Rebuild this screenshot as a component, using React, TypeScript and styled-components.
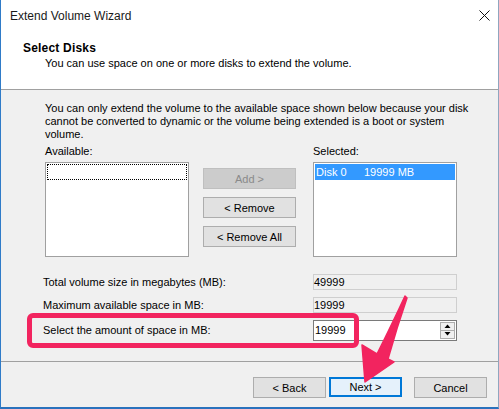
import React from "react";
import styled, { createGlobalStyle } from "styled-components";

const Global = createGlobalStyle`
  html, body { margin: 0; padding: 0; background: #ffffff; }
  body { font-family: "Liberation Sans", Arial, sans-serif; font-size: 11px; color: #000; }
  * { box-sizing: border-box; }
`;

const Window = styled.div`
  position: relative;
  width: 499px;
  height: 409px;
  background: #f0f0f0;
  border-left: 1px solid #2f7bc8;
  border-right: 1px solid #8fa6bf;
  border-bottom: 2px solid #2a72bd;
  display: flex;
  flex-direction: column;
  overflow: hidden;
`;

const TitleBar = styled.div`
  height: 31px;
  flex: none;
  background: #fff;
  display: flex;
  align-items: center;
  justify-content: space-between;
  padding: 0 8px 0 9px;
`;

const Title = styled.span`
  font-size: 12px;
  color: #1a1a1a;
  margin-top: 1px;
`;

const Header = styled.div`
  height: 59px;
  flex: none;
  background: #fff;
  border-bottom: 1px solid #a0a0a0;
  padding: 10px 0 0 22px;
`;

const HeaderTitle = styled.div`
  font-size: 12px;
  font-weight: bold;
  line-height: 14px;
  letter-spacing: 0.2px;
`;

const HeaderSub = styled.div`
  font-size: 11px;
  line-height: 14px;
  margin: 1px 0 0 22px;
`;

const Body = styled.div`
  position: relative;
  height: 272px;
  flex: none;
  border-bottom: 1px solid #a0a0a0;
  padding: 12px 0 0 42px;
`;

const Intro = styled.p`
  margin: 0 0 0 2px;
  line-height: 13px;
  font-size: 11px;
`;

const DiskGrid = styled.div`
  display: grid;
  grid-template-columns: 144px 96px 144px;
  grid-template-rows: 13px 95px;
  column-gap: 14px;
  row-gap: 4px;
  margin: 4px 0 0 2px;
`;

const Label = styled.span`
  line-height: 13px;
  font-size: 11px;
  white-space: nowrap;
`;

const ListBox = styled.div`
  background: #fff;
  border: 1px solid #a0a0a0;
  padding: 1px;
`;

const FocusRow = styled.div`
  height: 16px;
  border: 1px dotted #000;
`;

const SelectedItem = styled.div`
  height: 16px;
  background: #3399ff;
  color: #fff;
  display: flex;
  align-items: center;
  padding-left: 1px;
  font-size: 11px;
`;

const ItemCell = styled.span<{ $w?: number }>`
  width: ${(p) => (p.$w ? `${p.$w}px` : "auto")};
`;

const ButtonColumn = styled.div`
  display: flex;
  flex-direction: column;
  gap: 8px;
  padding: 6px 3px 0 0;
`;

const Button = styled.button<{ $disabled?: boolean; $default?: boolean }>`
  font-family: "Liberation Sans", Arial, sans-serif;
  font-size: 11px;
  height: ${(p) => (p.$default ? 20 : 21)}px;
  padding: 0;
  color: ${(p) => (p.$disabled ? "#8a8a8a" : "#000")};
  background: ${(p) => (p.$disabled ? "#cccccc" : p.$default ? "#e5f1fb" : "#e1e1e1")};
  border: ${(p) =>
    p.$default ? "2px solid #0078d7" : p.$disabled ? "1px solid #bfbfbf" : "1px solid #adadad"};
  cursor: default;
`;

const SizeGrid = styled.div`
  display: grid;
  grid-template-columns: 270px 144px;
  grid-template-rows: 16px 16px 21px;
  row-gap: 7px;
  align-items: center;
  margin-top: 17px;
`;

const ReadOnlyField = styled.div`
  height: 16px;
  background: #f0f0f0;
  border: 1px solid #cfcfcf;
  display: flex;
  align-items: center;
  font-size: 11px;
`;

const SpinField = styled.div`
  height: 21px;
  background: #fff;
  border: 1px solid #7a7a7a;
  display: flex;
  align-items: center;
  justify-content: space-between;
  padding: 0 1px;
  font-size: 11px;
  margin-top: -1px;
`;

const Spinner = styled.div`
  display: flex;
  flex-direction: column;
  width: 15px;
  height: 17px;
`;

const SpinBtn = styled.div`
  flex: 1;
  background: #f0f0f0;
  border: 1px solid #adadad;
  display: flex;
  align-items: center;
  justify-content: center;
  & + & { border-top: none; }
`;

const Highlight = styled.div`
  position: absolute;
  left: 26px;
  top: 223px;
  width: 332px;
  height: 35px;
  border: 5px solid #f2245f;
  border-radius: 6px;
  pointer-events: none;
`;

const Footer = styled.div`
  flex: 1;
  display: flex;
  justify-content: flex-end;
  align-items: flex-start;
  padding: 15px 11px 0 0;
`;

const NavPair = styled.div`
  display: flex;
  gap: 3px;
  margin-right: 12px;
`;

const FooterButton = styled(Button)`
  width: 73px;
`;

const Overlay = styled.svg`
  position: absolute;
  left: -1px;
  top: 0;
  width: 499px;
  height: 409px;
  pointer-events: none;
`;

const Tri = ({ up }: { up?: boolean }) => (
  <svg width="7" height="4" viewBox="0 0 7 4">
    <path d={up ? "M0.5 4 L3.5 0.5 L6.5 4 Z" : "M0.5 0 L3.5 3.5 L6.5 0 Z"} fill="#000" />
  </svg>
);

export default function App() {
  return (
    <>
      <Global />
      <Window>
        <TitleBar>
          <Title>Extend Volume Wizard</Title>
          <svg width="11" height="11" viewBox="0 0 11 11">
            <path d="M0.5 0.5 L10.5 10.5 M10.5 0.5 L0.5 10.5" stroke="#111" strokeWidth="1" />
          </svg>
        </TitleBar>
        <Header>
          <HeaderTitle>Select Disks</HeaderTitle>
          <HeaderSub>You can use space on one or more disks to extend the volume.</HeaderSub>
        </Header>
        <Body>
          <Intro>
            You can only extend the volume to the available space shown below because your disk
            <br />
            cannot be converted to dynamic or the volume being extended is a boot or system
            <br />
            volume.
          </Intro>
          <DiskGrid>
            <Label>Available:</Label>
            <span />
            <Label>Selected:</Label>
            <ListBox>
              <FocusRow />
            </ListBox>
            <ButtonColumn>
              <Button $disabled>Add &gt;</Button>
              <Button>&lt; Remove</Button>
              <Button>&lt; Remove All</Button>
            </ButtonColumn>
            <ListBox>
              <SelectedItem>
                <ItemCell $w={48}>Disk 0</ItemCell>
                <ItemCell>19999 MB</ItemCell>
              </SelectedItem>
            </ListBox>
          </DiskGrid>
          <SizeGrid>
            <Label>Total volume size in megabytes (MB):</Label>
            <ReadOnlyField>49999</ReadOnlyField>
            <Label>Maximum available space in MB:</Label>
            <ReadOnlyField>19999</ReadOnlyField>
            <Label>Select the amount of space in MB:</Label>
            <SpinField>
              <span>19999</span>
              <Spinner>
                <SpinBtn>
                  <Tri up />
                </SpinBtn>
                <SpinBtn>
                  <Tri />
                </SpinBtn>
              </Spinner>
            </SpinField>
          </SizeGrid>
          <Highlight />
        </Body>
        <Footer>
          <NavPair>
            <FooterButton>&lt; Back</FooterButton>
            <FooterButton $default>Next &gt;</FooterButton>
          </NavPair>
          <FooterButton>Cancel</FooterButton>
        </Footer>
        <Overlay viewBox="0 0 499 409">
          <path
            d="M405 296 Q393 322 377 354 L362 345 L365 382 L394 362 L388 359 Q397 327 407 298 Z"
            fill="#f2245f"
            stroke="#f2245f"
            strokeWidth="1.5"
            strokeLinejoin="round"
          />
        </Overlay>
      </Window>
    </>
  );
}
